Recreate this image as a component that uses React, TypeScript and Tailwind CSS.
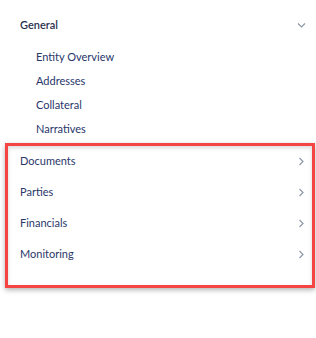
import React from 'react';

const subItems = ['Entity Overview', 'Addresses', 'Collateral', 'Narratives'];
const sections = ['Documents', 'Parties', 'Financials', 'Monitoring'];

const ChevronDown = () => (
  <svg width="9" height="6" viewBox="0 0 9 6" fill="none" className="text-[#8e97a8]">
    <path d="M1 1.5l3.5 3.5 3.5-3.5" stroke="currentColor" strokeWidth="1.2" />
  </svg>
);

const ChevronRight = () => (
  <svg width="6" height="9" viewBox="0 0 6 9" fill="none" className="text-[#8e97a8]">
    <path d="M1.5 1l3.5 3.5-3.5 3.5" stroke="currentColor" strokeWidth="1.2" />
  </svg>
);

const App = () => {
  return (
    <div className="w-[316px] h-[338px] bg-white pt-[10px] font-['Lato','Open_Sans',sans-serif] text-[11px]">
      <div className="flex items-center justify-between h-[30px] pl-[20px] pr-[10px]">
        <span className="font-semibold text-[#2a3150]">General</span>
        <ChevronDown />
      </div>
      <ul className="mt-[5px] pl-[36px]">
        {subItems.map((item) => (
          <li key={item} className="h-[24px] flex items-center text-[#28366a]">
            {item}
          </li>
        ))}
      </ul>
      <div className="mt-[2px] ml-[5px] mr-[1px] border-[3px] border-[#f44444] pb-[15px] shadow-[0_2px_5px_rgba(0,0,0,0.3),inset_0_2px_4px_rgba(0,0,0,0.15)]">
        {sections.map((section) => (
          <div key={section} className="h-[31px] flex items-center justify-between pl-[12px] pr-[8px]">
            <span className="text-[#2b376a]">{section}</span>
            <ChevronRight />
          </div>
        ))}
      </div>
    </div>
  );
};

export default App;
